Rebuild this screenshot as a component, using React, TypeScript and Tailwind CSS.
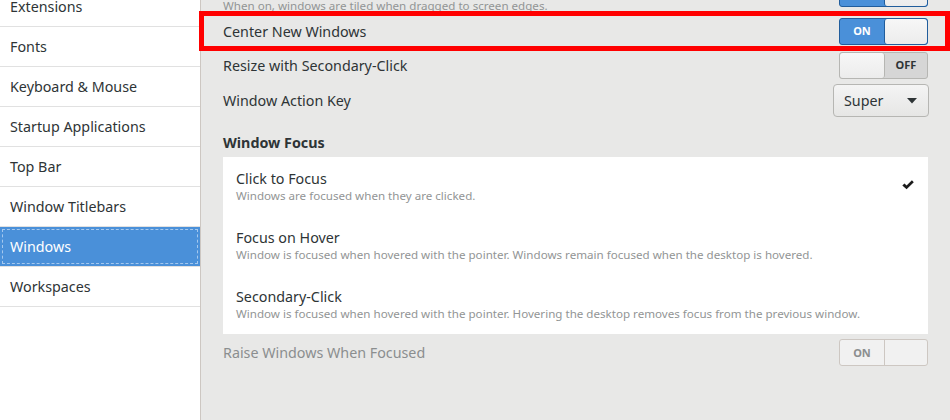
import React from "react";

const font = { fontFamily: '"Noto Sans", "DejaVu Sans", sans-serif' };

type SwitchProps = { on: boolean; disabled?: boolean };

function Switch({ on, disabled }: SwitchProps) {
  if (disabled) {
    return (
      <div className="flex h-[27px] w-[89px] shrink-0 overflow-hidden rounded-[3px] border border-[#cdc7c2] bg-[#f1f1f1]">
        <div className="flex w-[45px] items-center justify-center border-r border-[#cdc7c2] text-[11px] font-bold text-[#8b8e8f]">
          ON
        </div>
        <div className="flex-1" />
      </div>
    );
  }
  if (on) {
    return (
      <div className="flex h-[27px] w-[89px] shrink-0 overflow-hidden rounded-[3px] border border-[#215d9c] bg-[#4a90d9]">
        <div className="flex w-[44px] items-center justify-center text-[11px] font-bold text-white">ON</div>
        <div className="flex-1 rounded-[3px] border-l border-[#215d9c] bg-gradient-to-b from-[#f7f7f7] to-[#ececec]" />
      </div>
    );
  }
  return (
    <div className="flex h-[27px] w-[89px] shrink-0 overflow-hidden rounded-[3px] border border-[#b6b6b3] bg-[#d6d6d6]">
      <div className="w-[45px] rounded-[3px] border-r border-[#b6b6b3] bg-gradient-to-b from-[#f7f7f7] to-[#ececec]" />
      <div className="flex flex-1 items-center justify-center text-[11px] font-bold text-[#2e3436]">OFF</div>
    </div>
  );
}

const sidebarItems = [
  "Extensions",
  "Fonts",
  "Keyboard & Mouse",
  "Startup Applications",
  "Top Bar",
  "Window Titlebars",
  "Windows",
  "Workspaces",
];

const focusModes = [
  { title: "Click to Focus", sub: "Windows are focused when they are clicked.", checked: true },
  {
    title: "Focus on Hover",
    sub: "Window is focused when hovered with the pointer. Windows remain focused when the desktop is hovered.",
  },
  {
    title: "Secondary-Click",
    sub: "Window is focused when hovered with the pointer. Hovering the desktop removes focus from the previous window.",
  },
];

function Sidebar() {
  return (
    <aside className="h-full w-[201px] shrink-0 overflow-hidden border-r border-[#cdc7c2] bg-white">
      <div className="mt-[-13px] flex flex-col">
        {sidebarItems.map((item) => {
          const selected = item === "Windows";
          return (
            <div
              key={item}
              className={
                selected
                  ? "flex h-[40px] items-center border-b border-[#e1e1e1] bg-[#4a90d9] p-[2px]"
                  : "flex h-[40px] items-center border-b border-[#e1e1e1] px-[10px] text-[#2e3436]"
              }
            >
              {selected ? (
                <div className="flex h-full w-full items-center border border-dashed border-[#a5c8ee] px-[7px] text-white">
                  {item}
                </div>
              ) : (
                item
              )}
            </div>
          );
        })}
      </div>
    </aside>
  );
}

function SettingRow({ label, children }: { label: string; children: React.ReactNode }) {
  return (
    <div className="flex items-center justify-between">
      <span className="text-[#2e3436]">{label}</span>
      {children}
    </div>
  );
}

export default function App() {
  return (
    <div className="relative flex h-[420px] w-[950px] overflow-hidden text-[14.3px]" style={font}>
      <Sidebar />
      <main className="flex-1 overflow-hidden bg-[#e8e8e7] pl-[22px] pr-[22px]">
        <div className="mt-[-20px] flex flex-col">
          {/* tiling row, scrolled mostly out of view */}
          <div className="flex items-end justify-between">
            <span className="mb-[-6px] text-[11.6px] leading-[14px] text-[#929595]">
              When on, windows are tiled when dragged to screen edges.
            </span>
            <div className="flex h-[27px] w-[89px] shrink-0 overflow-hidden rounded-[3px] border border-[#215d9c] bg-[#4a90d9]">
              <div className="w-[44px]" />
              <div className="flex-1 rounded-[3px] border-l border-[#215d9c] bg-gradient-to-b from-[#f7f7f7] to-[#ececec]" />
            </div>
          </div>

          <div className="mt-[11px] flex flex-col gap-[7px]">
            <SettingRow label="Center New Windows">
              <Switch on />
            </SettingRow>
            <SettingRow label="Resize with Secondary-Click">
              <Switch on={false} />
            </SettingRow>
          </div>
          <div className="mt-[5px]">
            <SettingRow label="Window Action Key">
              <div className="mr-[-1px] flex h-[33px] w-[96px] items-center justify-between rounded-[4px] border border-[#b6b6b3] bg-gradient-to-b from-[#f4f4f4] to-[#e6e6e5] pl-[10px] pr-[11px] text-[#2e3436]">
                <span>Super</span>
                <svg width="10" height="6" viewBox="0 0 10 6">
                  <path d="M0 0 L10 0 L5 5.5 Z" fill="#2e3436" />
                </svg>
              </div>
            </SettingRow>
          </div>

          <div className="mt-[15px] font-bold text-[#2e3436]">Window Focus</div>

          <div className="mt-[4px] flex flex-col bg-white">
            {focusModes.map((m) => (
              <div key={m.title} className="flex h-[59px] items-center justify-between pl-[13px] pr-[14px]">
                <div className="flex flex-col">
                  <span className="leading-[18px] text-[#2e3436]">{m.title}</span>
                  <span className="text-[11.6px] leading-[16px] text-[#929595]">{m.sub}</span>
                </div>
                {m.checked && (
                  <svg width="12" height="10" viewBox="0 0 11 9" className="mt-[-3px]">
                    <path d="M0.3 5 L2.3 3.1 L4.2 5.0 L9.1 0.2 L10.8 1.9 L4.2 8.5 Z" fill="#1c1c1c" />
                  </svg>
                )}
              </div>
            ))}
          </div>

          <div className="mt-[5px] flex items-center justify-between">
            <span className="text-[#8b8e8f]">Raise Windows When Focused</span>
            <Switch on disabled />
          </div>
        </div>
      </main>
      {/* annotation highlight */}
      <div className="pointer-events-none absolute left-[199px] top-[11px] h-[40px] w-[751px] border-[5px] border-[#ff0000]" />
    </div>
  );
}
